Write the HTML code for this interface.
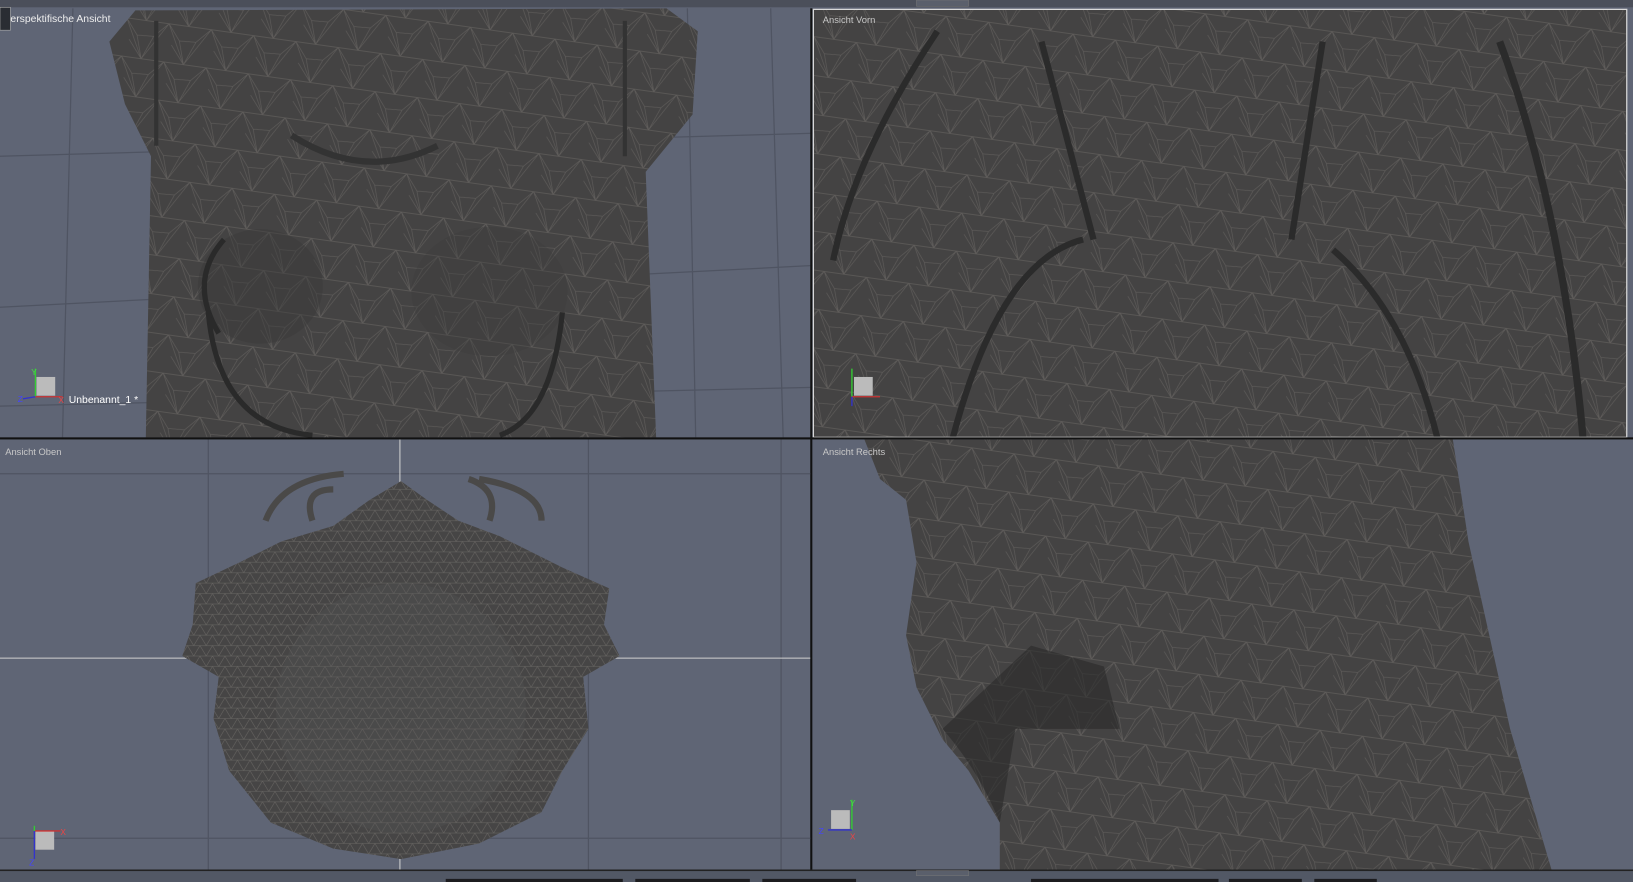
<!DOCTYPE html>
<html><head><meta charset="utf-8"><style>
html,body{margin:0;padding:0;width:1633px;height:882px;overflow:hidden;background:#5f6575}
svg{display:block}
text{font-family:"Liberation Sans",sans-serif}
</style></head><body>
<svg width="1633" height="882" viewBox="0 0 1568 847" preserveAspectRatio="none" xmlns="http://www.w3.org/2000/svg">
<defs>
<pattern id="m" width="41" height="37" patternUnits="userSpaceOnUse" patternTransform="rotate(8)">
<rect width="41" height="37" fill="#444343"/>
<path d="M0 0L19 37L41 0M0 0H41M0 37H41M19 37L12 15L0 0M19 37L28 14L41 0M12 15L28 14M5 20L19 37" stroke="#77736f" stroke-width="0.6" fill="none" opacity="0.55"/>
</pattern>
<pattern id="f" width="12" height="10" patternUnits="userSpaceOnUse">
<rect width="12" height="10" fill="#464545"/>
<path d="M0 0L6 10L12 0M0 0H12M0 10H12" stroke="#7a7672" stroke-width="0.5" fill="none" opacity="0.7"/>
</pattern>
</defs>
<rect width="1568" height="847" fill="#5f6575"/>
<rect width="1568" height="7" fill="#4b4f5a"/>
<rect x="880" y="0" width="50" height="6" fill="#5a5f6b" stroke="#777" stroke-width="0.5"/>
<g stroke="#4f5462" stroke-width="1.2">
<line x1="0" y1="150" x2="780" y2="128"/><line x1="0" y1="295" x2="780" y2="255"/><line x1="0" y1="390" x2="780" y2="372"/>
<line x1="70" y1="8" x2="60" y2="420"/><line x1="740" y1="8" x2="752" y2="420"/><line x1="660" y1="8" x2="668" y2="420"/>
</g>
<path d="M140 420 L145 150 L120 100 L105 40 L130 10 L640 8 L670 30 L665 110 L620 165 L630 420Z" fill="url(#m)"/>
<path d="M150 20 L150 140 M600 20 L600 150" stroke="#333" stroke-width="4"/>
<ellipse cx="250" cy="275" rx="60" ry="55" fill="#3a3a3a" opacity="0.45"/>
<ellipse cx="470" cy="280" rx="75" ry="62" fill="#3c3c3c" opacity="0.35"/>
<path d="M215 230 Q180 270 210 320" stroke="#2a2a2a" stroke-width="5" fill="none"/>
<path d="M200 300 Q210 410 300 418" stroke="#2a2a2a" stroke-width="5" fill="none"/>
<path d="M540 300 Q530 400 480 418" stroke="#2a2a2a" stroke-width="5" fill="none"/>
<path d="M280 130 Q350 175 420 140" stroke="#333" stroke-width="6" fill="none"/>
<path d="M781 9 H1562 V420 H781Z" fill="url(#m)"/>
<path d="M800 250 Q820 150 900 30" stroke="#2b2b2b" stroke-width="6" fill="none"/>
<path d="M915 420 Q960 250 1040 230" stroke="#2b2b2b" stroke-width="6" fill="none"/>
<path d="M1280 240 Q1350 300 1380 420" stroke="#2b2b2b" stroke-width="6" fill="none"/>
<path d="M1440 40 Q1500 200 1520 420" stroke="#2b2b2b" stroke-width="7" fill="none"/>
<path d="M1000 40 L1050 230" stroke="#2b2b2b" stroke-width="6"/>
<path d="M1270 40 L1240 230" stroke="#2b2b2b" stroke-width="6"/>
<rect x="781" y="9" width="781" height="411" fill="none" stroke="#d8d8d8" stroke-width="1.2"/>
<rect x="0" y="420" width="1568" height="2" fill="#111"/>
<rect x="778" y="8" width="2" height="828" fill="#111"/>
<g stroke="#4f5462" stroke-width="1.2">
<line x1="0" y1="455" x2="778" y2="455"/><line x1="0" y1="805" x2="778" y2="805"/>
<line x1="200" y1="422" x2="200" y2="836"/><line x1="565" y1="422" x2="565" y2="836"/><line x1="750" y1="422" x2="750" y2="836"/>
</g>
<line x1="0" y1="632" x2="778" y2="632" stroke="#d0d0d0" stroke-width="1"/>
<line x1="384" y1="422" x2="384" y2="836" stroke="#d0d0d0" stroke-width="1"/>
<path d="M255 500 Q270 460 330 455 M300 500 Q290 470 320 470 M520 500 Q520 470 460 460 M470 500 Q480 470 450 460" stroke="#4a4948" stroke-width="6" fill="none"/>
<path d="M385 462 L410 480 L440 500 L480 515 L510 530 L540 545 L585 565 L580 600 L595 630 L560 650 L565 700 L540 740 L520 780 L460 810 L385 825 L320 815 L260 790 L220 740 L205 690 L210 650 L175 630 L185 600 L188 560 L230 540 L270 520 L320 505 L355 480Z" fill="url(#f)"/>
<ellipse cx="385" cy="680" rx="120" ry="120" fill="#555" opacity="0.3"/>
<path d="M830 422 H1395 L1410 520 L1450 700 L1490 836 H960 L960 790 L930 740 L905 710 L880 660 L870 610 L880 540 L870 480 L845 460Z" fill="url(#m)"/>
<path d="M905 700 Q940 740 960 790 L975 700 L1075 700 L1060 640 L990 620Z" fill="#2a2a2a" opacity="0.6"/>
<rect x="0" y="836" width="1568" height="11" fill="#525865"/>
<rect x="0" y="835" width="1568" height="1.5" fill="#222"/>
<rect x="880" y="836" width="50" height="5" fill="#5a5f6b" stroke="#777" stroke-width="0.5"/>
<g fill="#1c1c1f"><rect x="428" y="844" width="170" height="3"/><rect x="610" y="844" width="110" height="3"/><rect x="732" y="844" width="90" height="3"/><rect x="990" y="844" width="180" height="3"/><rect x="1180" y="844" width="70" height="3"/><rect x="1262" y="844" width="60" height="3"/></g>
<rect x="0" y="7" width="10" height="22" fill="#2a2d33" stroke="#aaa" stroke-width="0.6"/>
<text x="10" y="21" font-size="10" fill="#eee">erspektifische Ansicht</text>
<text x="790" y="22" font-size="9" fill="#c8c8c8">Ansicht Vorn</text>
<text x="5" y="437" font-size="9" fill="#c8c8c8">Ansicht Oben</text>
<text x="790" y="437" font-size="9" fill="#c8c8c8">Ansicht Rechts</text>
<text x="66" y="387" font-size="10" fill="#fff">Unbenannt_1 *</text>
<g stroke-width="1.3">
<rect x="35" y="362" width="18" height="18" fill="#bbb"/><line x1="34" y1="381" x2="34" y2="354" stroke="#3c3"/><line x1="34" y1="381" x2="60" y2="381" stroke="#c33"/><line x1="34" y1="381" x2="22" y2="383" stroke="#33c"/>
<rect x="820" y="362" width="18" height="18" fill="#bbb"/><line x1="818" y1="381" x2="818" y2="354" stroke="#3c3"/><line x1="818" y1="381" x2="845" y2="381" stroke="#c33"/><line x1="818" y1="381" x2="818" y2="390" stroke="#33c"/>
<rect x="34" y="798" width="18" height="18" fill="#bbb"/><line x1="33" y1="798" x2="58" y2="798" stroke="#c33"/><line x1="33" y1="798" x2="33" y2="825" stroke="#33c"/><line x1="33" y1="798" x2="33" y2="793" stroke="#3c3"/>
<rect x="798" y="778" width="18" height="18" fill="#bbb"/><line x1="818" y1="797" x2="818" y2="768" stroke="#3c3"/><line x1="818" y1="797" x2="795" y2="797" stroke="#33c"/>
</g>
<g font-size="8"><text x="17" y="386" fill="#44f">Z</text><text x="56" y="387" fill="#e44">X</text><text x="30" y="360" fill="#4d4">Y</text>
<text x="58" y="802" fill="#e44">X</text><text x="28" y="831" fill="#44f">Z</text>
<text x="786" y="801" fill="#44f">Z</text><text x="816" y="774" fill="#4d4">Y</text><text x="816" y="806" fill="#e44">X</text></g>
</svg>
</body></html>
